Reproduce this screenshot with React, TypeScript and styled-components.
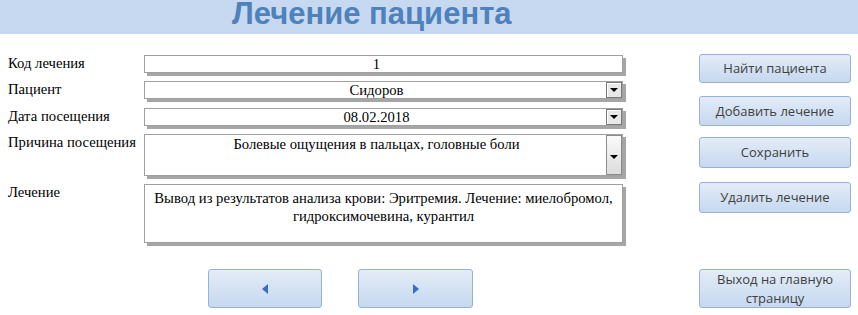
import styled, { createGlobalStyle } from "styled-components";

const GlobalStyle = createGlobalStyle`
  html, body {
    margin: 0;
    padding: 0;
    background: #ffffff;
  }
`;

const Page = styled.div`
  width: 858px;
  height: 315px;
  overflow: hidden;
  background: #ffffff;
`;

const Header = styled.div`
  height: 34px;
  background: #c6d9f1;
  padding-left: 232px;
  box-sizing: border-box;
`;

const Title = styled.h1`
  margin: 0;
  font-family: "Liberation Sans", Arial, sans-serif;
  font-weight: bold;
  font-size: 31px;
  line-height: 28px;
  color: #4f81bd;
`;

const Body = styled.div`
  display: flex;
  padding-top: 21px;
`;

const LeftPane = styled.div`
  width: 691px;
  padding-left: 8px;
  box-sizing: border-box;
`;

const Form = styled.div`
  display: grid;
  grid-template-columns: 136px 479px;
  grid-template-rows: 18px 19px 18px 42px 59px;
  row-gap: 8px;
`;

const Label = styled.div`
  font-family: "Liberation Serif", "Times New Roman", serif;
  font-size: 14.67px;
  line-height: 17px;
  color: #000000;
`;

const Field = styled.div<{ $h: number; $pad?: number; $lh?: number; $right?: number }>`
  position: relative;
  height: ${(p) => p.$h}px;
  box-sizing: border-box;
  border: 1px solid #a0a0a0;
  background: #ffffff;
  box-shadow: 3px 3px 0 #a6a6a6;
  padding: ${(p) => p.$pad ?? 0}px ${(p) => p.$right ?? 18}px 0 4px;
  font-family: "Liberation Serif", "Times New Roman", serif;
  font-size: 14.67px;
  line-height: ${(p) => p.$lh ?? 16}px;
  color: #000000;
  text-align: center;
`;

const Arrow = styled.span`
  width: 0;
  height: 0;
  border-left: 4px solid transparent;
  border-right: 4px solid transparent;
  border-top: 4px solid #000000;
`;

const DropButton = styled.div`
  position: absolute;
  right: 0;
  top: 0;
  width: 16px;
  height: 16px;
  box-sizing: border-box;
  border: 1px solid #7a7a7a;
  box-shadow: inset 1px 1px 0 #ffffff;
  background: #e8e8e8;
  display: flex;
  align-items: center;
  justify-content: center;
`;

const ScrollButton = styled.div`
  position: absolute;
  right: 0;
  top: 0;
  bottom: 0;
  width: 16px;
  box-sizing: border-box;
  border: 1px solid #8c8c8c;
  background: linear-gradient(to bottom, #fafafa, #dcdcdc);
  display: flex;
  align-items: center;
  justify-content: center;
  padding-top: 4px;
`;

const NavRow = styled.div`
  display: flex;
  gap: 36px;
  margin-top: 26px;
  margin-left: 200px;
`;

const Button = styled.button<{ $w?: number; $h?: number; $mt?: number }>`
  display: flex;
  align-items: center;
  justify-content: center;
  width: ${(p) => p.$w ?? 152}px;
  height: ${(p) => p.$h ?? 30}px;
  margin-top: ${(p) => p.$mt ?? 0}px;
  padding: 0 6px;
  box-sizing: border-box;
  border: 1px solid #95b3d7;
  border-radius: 3px;
  background: linear-gradient(to bottom, #e4ecf7 0%, #d3e1f3 55%, #c6d8f0 100%);
  font-family: "Open Sans", "Noto Sans", sans-serif;
  font-size: 13px;
  line-height: 19px;
  color: #3f3f3f;
  text-align: center;
`;

const NavArrow = styled.span<{ $dir: "left" | "right" }>`
  width: 0;
  height: 0;
  border-top: 5.5px solid transparent;
  border-bottom: 5.5px solid transparent;
  ${(p) =>
    p.$dir === "left"
      ? "border-right: 6px solid #3c6cc4;"
      : "border-left: 6px solid #3c6cc4;"}
`;

const RightPane = styled.div`
  display: flex;
  flex-direction: column;
  margin-left: 8px;
  margin-top: -1px;
`;

export default function App() {
  return (
    <Page>
      <GlobalStyle />
      <Header>
        <Title>Лечение пациента</Title>
      </Header>
      <Body>
        <LeftPane>
          <Form>
            <Label>Код лечения</Label>
            <Field $h={18} $pad={0}>1</Field>

            <Label>Пациент</Label>
            <Field $h={18}>
              Сидоров
              <DropButton>
                <Arrow />
              </DropButton>
            </Field>

            <Label>Дата посещения</Label>
            <Field $h={18}>
              08.02.2018
              <DropButton>
                <Arrow />
              </DropButton>
            </Field>

            <Label>Причина посещения</Label>
            <Field $h={42} $pad={1} $lh={17}>
              Болевые ощущения в пальцах, головные боли
              <ScrollButton>
                <Arrow />
              </ScrollButton>
            </Field>

            <Label>Лечение</Label>
            <Field $h={59} $pad={4} $lh={18} $right={4}>
              Вывод из результатов анализа крови: Эритремия. Лечение: миелобромол,
              гидроксимочевина, курантил
            </Field>
          </Form>
          <NavRow>
            <Button $w={114} $h={39}>
              <NavArrow $dir="left" />
            </Button>
            <Button $w={115} $h={39}>
              <NavArrow $dir="right" />
            </Button>
          </NavRow>
        </LeftPane>
        <RightPane>
          <Button $h={29}>Найти пациента</Button>
          <Button $mt={13}>Добавить лечение</Button>
          <Button $h={31} $mt={11}>Сохранить</Button>
          <Button $h={31} $mt={14}>Удалить лечение</Button>
          <Button $h={39} $mt={56}>Выход на главную страницу</Button>
        </RightPane>
      </Body>
    </Page>
  );
}
